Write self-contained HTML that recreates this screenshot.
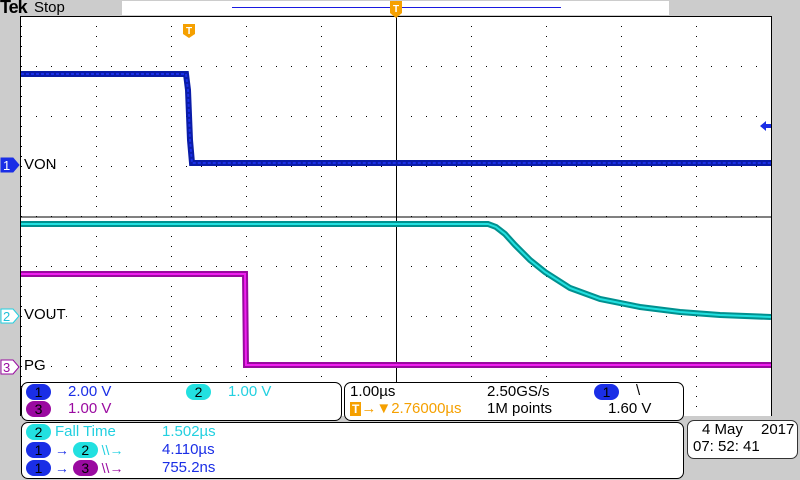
<!DOCTYPE html>
<html><head><meta charset="utf-8"><style>
body{margin:0;width:800px;height:480px;overflow:hidden;background:#cccccc;font-family:"Liberation Sans",sans-serif;position:relative}
.a{position:absolute;white-space:nowrap}
.pn{position:absolute;background:#fff;border:1px solid #000;border-radius:7px}
.pill{display:inline-block;border-radius:8px;width:25px;height:16px;line-height:16px;text-align:center;color:#000;font-size:14px}
.t{font-size:15px}
</style></head><body>
<div class="a" style="left:0;top:-3px;font-family:'Liberation Sans',sans-serif;font-weight:bold;font-size:18px;letter-spacing:-1px">Tek</div>
<div class="a" style="left:34px;top:-1px;font-size:15px">Stop</div>
<div class="a" style="left:122px;top:1px;width:547px;height:14px;background:#fff"></div>
<svg class="a" style="left:0;top:0" width="800" height="480">
<defs>
<pattern id="ph" x="21" y="16" width="15" height="50" patternUnits="userSpaceOnUse"><rect x="0" y="0" width="1" height="1" fill="#000"/></pattern>
<pattern id="pv" x="21" y="16" width="75" height="10" patternUnits="userSpaceOnUse"><rect x="0" y="0" width="1" height="1" fill="#000"/></pattern>
</defs>
<line x1="232" y1="7.5" x2="561" y2="7.5" stroke="#1a1ae0" stroke-width="1"/>
<rect x="21" y="16" width="750" height="400" fill="#fff"/>
<rect x="21" y="16" width="751" height="400" fill="url(#ph)"/>
<rect x="21" y="16" width="751" height="400" fill="url(#pv)"/>
<line x1="21" y1="217" x2="771" y2="217" stroke="#000"/>
<line x1="396.5" y1="16" x2="396.5" y2="416" stroke="#000"/>
<line x1="20.5" y1="16" x2="20.5" y2="416" stroke="#000"/>
<line x1="771.5" y1="16" x2="771.5" y2="416" stroke="#000"/>
<line x1="21" y1="16.5" x2="771" y2="16.5" stroke="#000"/>
<polyline points="21,74 186,74 188,90 190,140 192,163 771,163" fill="none" stroke="#0a1ca8" stroke-width="6"/>
<polyline points="21,74 186,74 188,90 190,140 192,163 771,163" fill="none" stroke="#1a2ee6" stroke-width="2" stroke-dasharray="3 2"/>
<polyline points="21,224 488,224 496,227 505,234 515,245 530,260 545,272 570,288 600,299 640,307 680,312 720,315 771,317" fill="none" stroke="#00908f" stroke-width="6"/>
<polyline points="21,224 488,224 496,227 505,234 515,245 530,260 545,272 570,288 600,299 640,307 680,312 720,315 771,317" fill="none" stroke="#22e0e0" stroke-width="2"/>
<polyline points="21,274 245,274 246,365 771,365" fill="none" stroke="#9a0aa0" stroke-width="6"/>
<polyline points="21,274 245,274 246,365 771,365" fill="none" stroke="#f020f0" stroke-width="2"/>
<path d="M183,24 h12 v10 l-6,4 l-6,-4z" fill="#f5a000"/><text x="186" y="34" font-size="10" font-family="Liberation Sans" font-weight="bold" fill="#fff">T</text>
<path d="M390,1 h12 v12 l-6,5 l-6,-5z" fill="#f5a000"/><text x="393" y="12" font-size="10" font-family="Liberation Sans" font-weight="bold" fill="#fff">T</text>
<path d="M760,126 l6,-5 v3 h5 v4 h-5 v3z" fill="#1a2ee6"/>
<path d="M1,158 h12 l6,7 l-6,7 h-12z" fill="#1a2ee6" stroke="#1a2ee6"/><text x="3" y="170" font-size="13" font-family="Liberation Sans" fill="#fff">1</text>
<path d="M1,309 h12 l6,7 l-6,7 h-12z" fill="#fff" stroke="#22d0e0"/><text x="3" y="321" font-size="13" font-family="Liberation Sans" fill="#22c0d8">2</text>
<path d="M1,360 h12 l6,7 l-6,7 h-12z" fill="#fff" stroke="#9a0aa0"/><text x="3" y="372" font-size="13" font-family="Liberation Sans" fill="#9a0aa0">3</text>
</svg>
<div class="a t" style="left:24px;top:156px">VON</div>
<div class="a t" style="left:24px;top:306px">VOUT</div>
<div class="a t" style="left:24px;top:357px">PG</div>
<div class="pn" style="left:21px;top:382px;width:319px;height:37px"></div>
<div class="a" style="left:26px;top:384px"><span class="pill" style="background:#1a2ee6">1</span></div>
<div class="a t" style="left:68px;top:383px;color:#1a2ee6">2.00 V</div>
<div class="a" style="left:186px;top:384px"><span class="pill" style="background:#22e0e0">2</span></div>
<div class="a t" style="left:228px;top:383px;color:#22d0e0">1.00 V</div>
<div class="a" style="left:26px;top:401px"><span class="pill" style="background:#9a0aa0">3</span></div>
<div class="a t" style="left:68px;top:400px;color:#9a0aa0">1.00 V</div>
<div class="pn" style="left:344px;top:382px;width:338px;height:37px"></div>
<div class="a t" style="left:350px;top:383px">1.00µs</div>
<div class="a t" style="left:487px;top:383px">2.50GS/s</div>
<div class="a" style="left:594px;top:384px"><span class="pill" style="background:#1a2ee6">1</span></div>
<div class="a t" style="left:636px;top:382px">\</div>
<div class="a t" style="left:350px;top:400px;color:#f5a000"><span style="background:#f5a000;color:#fff;font-weight:bold;font-size:12px;padding:0 2px">T</span>→▼2.76000µs</div>
<div class="a t" style="left:487px;top:400px">1M points</div>
<div class="a t" style="left:608px;top:400px">1.60 V</div>
<div class="pn" style="left:21px;top:422px;width:661px;height:55px"></div>
<div class="a" style="left:26px;top:424px"><span class="pill" style="background:#22e0e0">2</span></div>
<div class="a t" style="left:55px;top:423px;color:#22d0e0">Fall Time</div>
<div class="a t" style="left:162px;top:423px;color:#22d0e0">1.502µs</div>
<div class="a" style="left:26px;top:442px"><span class="pill" style="background:#1a2ee6">1</span><span style="color:#1a2ee6;font-size:14px"> → </span><span class="pill" style="background:#22e0e0">2</span><span style="color:#22d0e0;font-size:14px"> \\→</span></div>
<div class="a t" style="left:162px;top:441px;color:#1a2ee6">4.110µs</div>
<div class="a" style="left:26px;top:460px"><span class="pill" style="background:#1a2ee6">1</span><span style="color:#1a2ee6;font-size:14px"> → </span><span class="pill" style="background:#9a0aa0">3</span><span style="color:#9a0aa0;font-size:14px"> \\→</span></div>
<div class="a t" style="left:162px;top:459px;color:#1a2ee6">755.2ns</div>
<div class="pn" style="left:687px;top:420px;width:109px;height:37px;border-color:#333"></div>
<div class="a t" style="left:702px;top:421px">4 May</div>
<div class="a t" style="left:761px;top:421px">2017</div>
<div class="a t" style="left:693px;top:438px">07: 52: 41</div>
</body></html>
